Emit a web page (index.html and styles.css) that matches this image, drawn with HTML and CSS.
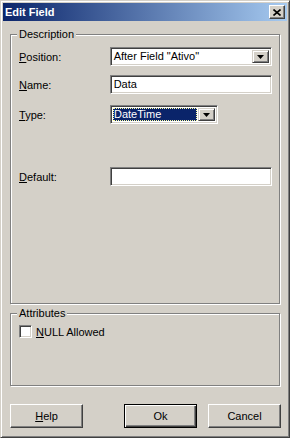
FILE: index.html
```html
<!DOCTYPE html>
<html>
<head>
  <title>Edit Field</title>
  <link rel="stylesheet" href="styles.css">
</head>
<body>
  <div class="window">
    <div class="titlebar">
      <span class="title">Edit Field</span>
      <span class="close-btn">
        <svg width="8" height="7" viewBox="0 0 8 7"><path d="M0.5 0.5L7.5 6.5M7.5 0.5L0.5 6.5" stroke="#000" stroke-width="1.6" fill="none"/></svg>
      </span>
    </div>

    <div class="client">
      <div class="group group-desc">
        <span class="group-title">Description</span>

        <div class="row row-position">
          <label><u>P</u>osition:</label>
          <div class="combo combo-wide">
            <span class="combo-text">After Field "Ativo"</span>
            <span class="combo-btn"><svg width="7" height="4" viewBox="0 0 7 4"><path d="M0 0h7L3.5 4z"/></svg></span>
          </div>
        </div>

        <div class="row row-name">
          <label><u>N</u>ame:</label>
          <div class="edit">Data</div>
        </div>

        <div class="row row-type">
          <label><u>T</u>ype:</label>
          <div class="combo combo-short">
            <span class="combo-text selected">DateTime</span>
            <span class="combo-btn"><svg width="7" height="4" viewBox="0 0 7 4"><path d="M0 0h7L3.5 4z"/></svg></span>
          </div>
        </div>

        <div class="row row-default">
          <label><u>D</u>efault:</label>
          <div class="edit"></div>
        </div>
      </div>

      <div class="group group-attr">
        <span class="group-title">Attributes</span>
        <div class="check-row">
          <span class="checkbox"></span>
          <span><u>N</u>ULL Allowed</span>
        </div>
      </div>

      <div class="buttons">
        <button class="btn"><u>H</u>elp</button>
        <button class="btn btn-default">Ok</button>
        <button class="btn">Cancel</button>
      </div>
    </div>
  </div>
</body>
</html>
```

FILE: styles.css
```css
body {
  margin: 0;
  padding: 0;
  font-family: "Liberation Sans", Arial, sans-serif;
  font-size: 11px;
  color: #000;
  background: #d4d0c8;
}

.window {
  box-sizing: border-box;
  width: 290px;
  height: 438px;
  padding: 2px;
  background: #d4d0c8;
  border: 1px solid;
  border-color: #d4d0c8 #404040 #404040 #d4d0c8;
  box-shadow: inset 1px 1px #fff, inset -1px -1px #808080;
  display: flex;
  flex-direction: column;
}

.titlebar {
  height: 18px;
  display: flex;
  align-items: center;
  justify-content: space-between;
  padding: 0 2px 0 2px;
  background: linear-gradient(to right, #0a246a, #a6caf0);
}

.title {
  color: #fff;
  font-weight: bold;
  font-size: 11px;
}

.close-btn {
  box-sizing: border-box;
  width: 16px;
  height: 14px;
  display: flex;
  align-items: center;
  justify-content: center;
  background: #d4d0c8;
  border: 1px solid;
  border-color: #fff #404040 #404040 #fff;
  box-shadow: inset -1px -1px #808080;
}

.client {
  flex: 1;
  display: flex;
  flex-direction: column;
  padding: 0 6px 0 7px;
}

/* group boxes */
.group {
  border: 1px solid #808080;
  box-shadow: inset 1px 1px #fff, 1px 1px #fff;
  padding: 0 7px 0 8px;
  margin-right: 1px;
}

.group-title {
  display: block;
  width: fit-content;
  margin: -7px 0 0 -2px;
  padding: 0 2px;
  line-height: 13px;
  background: #d4d0c8;
}

.group-desc {
  margin-top: 13px;
  height: 268px;
}

.group-attr {
  margin-top: 9px;
  height: 71px;
}

.row {
  display: flex;
  align-items: center;
}

.row label {
  width: 91px;
}

.row-position { margin-top: 6px; }
.row-name { margin-top: 9px; }
.row-type { margin-top: 11px; }
.row-default { margin-top: 43px; }

.edit,
.combo {
  box-sizing: border-box;
  height: 19px;
  background: #fff;
  border: 1px solid;
  border-color: #808080 #fff #fff #808080;
  box-shadow: inset 1px 1px #404040, inset -1px -1px #d4d0c8;
}

.edit {
  width: 163px;
  padding: 2px 3px;
  line-height: 13px;
}

.combo {
  display: flex;
  padding: 2px;
}

.combo-wide { width: 163px; }
.combo-short { width: 108px; }

.combo-text {
  flex: 1;
  padding: 0 1px;
  line-height: 13px;
}

.combo-text.selected {
  background: #0a246a;
  color: #fff;
  outline: 1px dotted #ffffa0;
  outline-offset: -1px;
  margin-right: 1px;
}

.combo-btn {
  box-sizing: border-box;
  width: 17px;
  display: flex;
  align-items: center;
  justify-content: center;
  background: #d4d0c8;
  border: 1px solid;
  border-color: #d4d0c8 #404040 #404040 #d4d0c8;
  box-shadow: inset 1px 1px #fff, inset -1px -1px #808080;
}

.check-row {
  display: flex;
  align-items: center;
  gap: 4px;
  margin-top: 5px;
}

.checkbox {
  box-sizing: border-box;
  width: 13px;
  height: 13px;
  background: #fff;
  border: 1px solid;
  border-color: #808080 #fff #fff #808080;
  box-shadow: inset 1px 1px #404040, inset -1px -1px #d4d0c8;
}

.buttons {
  display: flex;
  margin-top: 18px;
}

.btn {
  box-sizing: border-box;
  width: 73px;
  height: 24px;
  padding: 0;
  font-family: inherit;
  font-size: 11px;
  color: #000;
  background: #d4d0c8;
  border: 1px solid;
  border-color: #fff #404040 #404040 #fff;
  box-shadow: inset -1px -1px #808080;
}

.btn-default {
  margin-left: auto;
  border: 1px solid #000;
  box-shadow: inset 1px 1px #fff, inset -1px -1px #404040, inset -2px -2px #808080;
}

.btn + .btn-default + .btn {
  margin-left: 11px;
}
```
